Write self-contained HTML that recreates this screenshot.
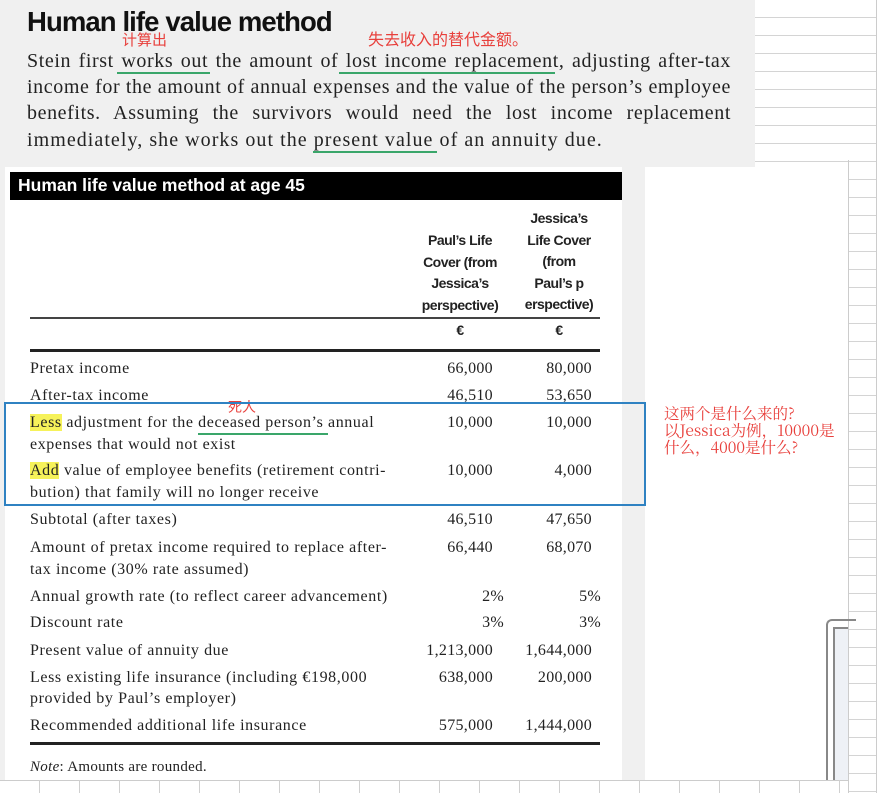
<!DOCTYPE html>
<html><head><meta charset="utf-8"><style>
*{margin:0;padding:0;box-sizing:border-box}
body{width:877px;height:793px;overflow:hidden;background:#fff;position:relative;font-family:"Liberation Serif","Noto Serif CJK SC",serif;color:#222}
.a{position:absolute;white-space:nowrap}
.grid{position:absolute;background:repeating-linear-gradient(to bottom,#fff 0,#fff 17px,#d4d4d4 17px,#d4d4d4 18px)}
.p{position:absolute;left:27px;width:704px;font-size:20px;letter-spacing:0.6px;line-height:26px;text-align:justify;text-align-last:justify;white-space:nowrap}
.ul{position:absolute;height:2px;background:#3aa66a}
.red{color:#e8403c;font-family:"Noto Sans CJK SC",sans-serif}
.h{position:absolute;font-family:"Liberation Sans",sans-serif;font-weight:bold;font-size:14px;text-align:center;width:100px;line-height:21.5px;letter-spacing:-0.5px}
.t{position:absolute;left:30px;font-size:16px;letter-spacing:0.6px;white-space:nowrap;line-height:22px}
.n{position:absolute;font-size:16px;letter-spacing:0.3px;text-align:right;white-space:nowrap;line-height:22px}
.hl{background:#f6f25a}
</style></head><body>
<div class="grid" style="left:755px;top:0;width:122px;height:793px"></div>
<div style="position:absolute;left:876px;top:0;width:1px;height:793px;background:#ccc"></div>
<div style="position:absolute;left:848px;top:160px;width:1px;height:633px;background:#ccc"></div>
<div style="position:absolute;left:0;top:0;width:755px;height:167px;background:#f0f0f0"></div>
<div class="a" style="left:27px;top:6px;font-family:'Liberation Sans',sans-serif;font-weight:bold;font-size:27.5px;letter-spacing:-0.9px;color:#111">Human life value method</div>
<div class="a red" style="left:122px;top:31px;font-size:15px;line-height:17px">计算出</div>
<div class="a red" style="left:368px;top:29px;font-size:16px;line-height:18px">失去收入的替代金额。</div>
<div class="p" style="top:48px">Stein first works out the amount of lost income replacement, adjusting after-tax</div>
<div class="p" style="top:74px">income for the amount of annual expenses and the value of the person’s employee</div>
<div class="p" style="top:100px">benefits. Assuming the survivors would need the lost income replacement</div>
<div class="p" style="top:127px;text-align-last:left;width:auto;letter-spacing:1.05px">immediately, she works out the present value of an annuity due.</div>
<div class="ul" style="left:117px;top:72px;width:93px"></div>
<div class="ul" style="left:339px;top:72px;width:216px"></div>
<div class="ul" style="left:313px;top:151px;width:124px"></div>

<div style="position:absolute;left:0;top:167px;width:848px;height:613px;background:#f0f0f0"></div>
<div style="position:absolute;left:5px;top:167px;width:617px;height:613px;background:#fff"></div>
<div style="position:absolute;left:645px;top:167px;width:203px;height:613px;background:#fff"></div>
<div style="position:absolute;left:10px;top:172px;width:612px;height:28px;background:#000"></div>
<div class="a" style="left:18px;top:175px;color:#fff;font-family:'Liberation Sans',sans-serif;font-weight:bold;font-size:17.5px;letter-spacing:0px">Human life value method at age 45</div>

<div class="h" style="left:410px;top:230px">Paul’s Life<br>Cover (from<br>Jessica’s<br>perspective)</div>
<div class="h" style="left:509px;top:208px">Jessica’s<br>Life Cover<br>(from<br>Paul’s p<br>erspective)</div>
<div style="position:absolute;left:30px;top:317px;width:570px;height:2px;background:#444"></div>
<div class="h" style="left:410px;top:320px">€</div>
<div class="h" style="left:509px;top:320px">€</div>
<div style="position:absolute;left:30px;top:349px;width:570px;height:3px;background:#222"></div>

<div class="t" style="top:358px">Pretax income</div>
<div class="t" style="top:385px">After-tax income</div>
<div class="t" style="top:412px"><span class="hl">Less</span> adjustment for the deceased person’s annual</div>
<div class="t" style="top:434px">expenses that would not exist</div>
<div class="t" style="top:460px"><span class="hl">Add</span> value of employee benefits (retirement contri-</div>
<div class="t" style="top:482px">bution) that family will no longer receive</div>
<div class="t" style="top:509px">Subtotal (after taxes)</div>
<div class="t" style="top:537px">Amount of pretax income required to replace after-</div>
<div class="t" style="top:559px">tax income (30% rate assumed)</div>
<div class="t" style="top:586px">Annual growth rate (to reflect career advancement)</div>
<div class="t" style="top:612px">Discount rate</div>
<div class="t" style="top:640px">Present value of annuity due</div>
<div class="t" style="top:667px">Less existing life insurance (including €198,000</div>
<div class="t" style="top:688px">provided by Paul’s employer)</div>
<div class="t" style="top:715px">Recommended additional life insurance</div>
<div class="ul" style="left:198px;top:433px;width:130px"></div>
<div class="a red" style="left:228px;top:400px;font-size:14px;line-height:15px">死人</div>

<div class="n" style="right:384px;top:358px">66,000</div><div class="n" style="right:285px;top:358px">80,000</div>
<div class="n" style="right:384px;top:385px">46,510</div><div class="n" style="right:285px;top:385px">53,650</div>
<div class="n" style="right:384px;top:412px">10,000</div><div class="n" style="right:285px;top:412px">10,000</div>
<div class="n" style="right:384px;top:460px">10,000</div><div class="n" style="right:285px;top:460px">4,000</div>
<div class="n" style="right:384px;top:509px">46,510</div><div class="n" style="right:285px;top:509px">47,650</div>
<div class="n" style="right:384px;top:537px">66,440</div><div class="n" style="right:285px;top:537px">68,070</div>
<div class="n" style="right:373px;top:586px">2%</div><div class="n" style="right:276px;top:586px">5%</div>
<div class="n" style="right:373px;top:612px">3%</div><div class="n" style="right:276px;top:612px">3%</div>
<div class="n" style="right:384px;top:640px">1,213,000</div><div class="n" style="right:285px;top:640px">1,644,000</div>
<div class="n" style="right:384px;top:667px">638,000</div><div class="n" style="right:285px;top:667px">200,000</div>
<div class="n" style="right:384px;top:715px">575,000</div><div class="n" style="right:285px;top:715px">1,444,000</div>
<div style="position:absolute;left:30px;top:742px;width:570px;height:3px;background:#222"></div>
<div class="t" style="top:756px;font-size:15px;letter-spacing:0.3px"><i>Note</i>: Amounts are rounded.</div>

<div style="position:absolute;left:4px;top:402px;width:642px;height:104px;border:2px solid #2f82c2"></div>

<div class="a" style="left:664px;top:405px;color:#e8403c;font-family:'Noto Serif CJK SC',serif;font-size:15.5px;line-height:17px">这两个是什么来的?<br>以Jessica为例，10000是<br>什么，4000是什么?</div>

<div style="position:absolute;left:826px;top:619px;width:30px;height:165px;border-left:2px solid #888;border-top:2px solid #888;border-top-left-radius:6px"></div>
<div style="position:absolute;left:833px;top:627px;width:15px;height:155px;border-left:2px solid #888;border-top:2px solid #888;background:#eef1f6"></div>

<div style="position:absolute;left:0;top:780px;width:848px;height:13px;background:#fff;border-top:1px solid #ccc"></div>
<div style="position:absolute;left:0;top:780px;width:848px;height:13px;background:repeating-linear-gradient(to right,transparent 0,transparent 39px,#d0d0d0 39px,#d0d0d0 40px)"></div>
</body></html>
